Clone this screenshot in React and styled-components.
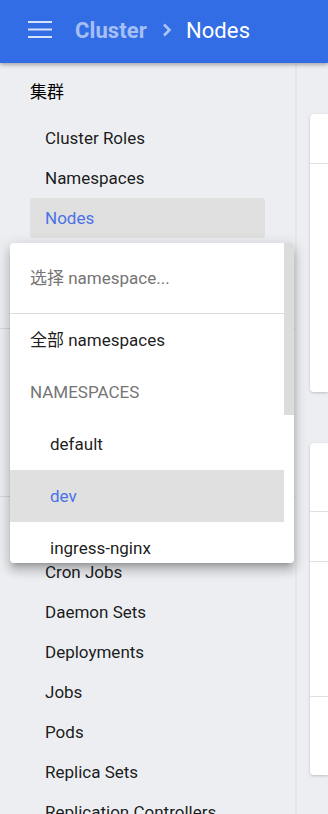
import React from 'react';
import styled, { createGlobalStyle } from 'styled-components';

const GlobalStyle = createGlobalStyle`
  html, body {
    margin: 0;
    padding: 0;
    background: #eceef1;
    font-family: Roboto, "Noto Sans CJK SC", sans-serif;
    overflow: hidden;
  }
`

const Page = styled.div`
  position: relative;
  height: 814px;
  display: flex;
  flex-direction: column;
  overflow: hidden;
`

const Toolbar = styled.header`
  height: 63px;
  flex-shrink: 0;
  background: #326de6;
  display: flex;
  align-items: center;
  padding-left: 28px;
  box-shadow: 0 2px 4px rgba(0, 0, 0, 0.3);
  position: relative;
  z-index: 2;
`

const MenuButton = styled.div`
  width: 24px;
  height: 18px;
  margin-right: 23px;
  display: flex;
  margin-top: -3px;
`

const Crumb = styled.span`
  font-size: 22px;
  font-weight: ${p => (p.$current ? 400 : 700)};
  color: ${p => (p.$current ? '#ffffff' : 'rgba(255, 255, 255, 0.58)')};
  letter-spacing: 0.1px;
  margin-top: -3px;
`

const Chevron = styled.span`
  display: flex;
  margin: -3px 14px 0 15px;
`

const Body = styled.div`
  flex: 1;
  display: flex;
  min-height: 0;
`

const Sidebar = styled.nav`
  width: 295px;
  flex-shrink: 0;
  border-right: 2px solid #e6e7ea;
  background: #eceef1;
`

const Section = styled.section`
  padding: 16px 0 10px;
  border-bottom: ${p => (p.$divided ? '1px solid #d4d5d8' : 'none')};
`

const SectionTitle = styled.div`
  height: 26px;
  line-height: 26px;
  padding-left: 30px;
  margin-bottom: 13px;
  font-size: 17px;
  color: #000;
`

const NavItem = styled.div`
  margin-left: 30px;
  width: 235px;
  height: 40px;
  line-height: 40px;
  padding-left: 15px;
  box-sizing: border-box;
  font-size: 17px;
  border-radius: 3px;
  white-space: nowrap;
  color: ${p => (p.$active ? '#4a72e6' : 'rgba(0, 0, 0, 0.9)')};
  background: ${p => (p.$active ? '#e0e0e0' : 'transparent')};
`

const SelectField = styled.div`
  margin: 0 30px 46px;
  height: 56px;
  box-sizing: border-box;
  border-bottom: 1px solid #9e9e9e;
`

const Main = styled.main`
  flex: 1;
  padding: 51px 0 0 13px;
  display: flex;
  flex-direction: column;
  gap: 51px;
`

const Card = styled.div`
  background: #fff;
  border-radius: 4px 0 0 4px;
  box-shadow: 0 1px 3px rgba(0, 0, 0, 0.2);
  display: flex;
  flex-direction: column;
`

const CardRow = styled.div`
  height: ${p => p.$h}px;
  border-bottom: ${p => (p.$last ? 'none' : '1px solid #e0e0e0')};
  box-sizing: border-box;
`

const Dropdown = styled.div`
  position: absolute;
  left: 10px;
  top: 243px;
  width: 284px;
  height: 320px;
  background: #fff;
  border-radius: 4px;
  overflow: hidden;
  display: flex;
  z-index: 5;
  box-shadow: 0 5px 5px -3px rgba(0, 0, 0, 0.2), 0 8px 10px 1px rgba(0, 0, 0, 0.14),
    0 3px 14px 2px rgba(0, 0, 0, 0.12);
`

const OptionList = styled.div`
  flex: 1;
  display: flex;
  flex-direction: column;
`

const SearchBox = styled.div`
  height: 70px;
  flex-shrink: 0;
  line-height: 70px;
  padding-left: 20px;
  font-size: 17px;
  color: #757575;
  border-bottom: 1px solid #dcdcdc;
`

const Option = styled.div`
  height: 52px;
  flex-shrink: 0;
  line-height: 52px;
  padding-left: ${p => (p.$nested ? 40 : 20)}px;
  font-size: 17px;
  color: ${p => (p.$group ? '#757575' : p.$selected ? '#4a72e6' : 'rgba(0, 0, 0, 0.9)')};
  background: ${p => (p.$selected ? '#e0e0e0' : 'transparent')};
`

const ScrollTrack = styled.div`
  width: 10px;
  flex-shrink: 0;
`

const ScrollThumb = styled.div`
  height: 172px;
  background: #dcdcdc;
`

const clusterItems = ['Cluster Roles', 'Namespaces', 'Nodes', 'Persistent Volumes', 'Storage Classes']
const workloadItems = [
  'Cron Jobs',
  'Daemon Sets',
  'Deployments',
  'Jobs',
  'Pods',
  'Replica Sets',
  'Replication Controllers',
  'Stateful Sets',
]
const namespaces = ['default', 'dev', 'ingress-nginx', 'kube-public', 'kube-system']

const App = () => {
  return (
    <Page>
      <GlobalStyle />
      <Toolbar>
        <MenuButton>
          <svg width="24" height="18" viewBox="0 0 24 18">
            <g stroke="#d6e4fb" strokeWidth="2">
              <line x1="0" y1="1" x2="24" y2="1" />
              <line x1="0" y1="8.5" x2="24" y2="8.5" />
              <line x1="0" y1="16" x2="24" y2="16" />
            </g>
          </svg>
        </MenuButton>
        <Crumb>Cluster</Crumb>
        <Chevron>
          <svg width="10" height="14" viewBox="0 0 10 14">
            <path d="M2 1.5 L7.5 7 L2 12.5" fill="none" stroke="rgba(255,255,255,0.6)" strokeWidth="2.6" />
          </svg>
        </Chevron>
        <Crumb $current>Nodes</Crumb>
      </Toolbar>

      <Body>
        <Sidebar>
          <Section $divided>
            <SectionTitle>集群</SectionTitle>
            {clusterItems.map(item => (
              <NavItem key={item} $active={item === 'Nodes'}>{item}</NavItem>
            ))}
          </Section>
          <Section $divided>
            <SectionTitle>命名空间</SectionTitle>
            <SelectField />
          </Section>
          <Section>
            <SectionTitle>工作负载</SectionTitle>
            {workloadItems.map(item => (
              <NavItem key={item}>{item}</NavItem>
            ))}
          </Section>
        </Sidebar>

        <Main>
          <Card>
            <CardRow $h={50} />
            <CardRow $h={228} $last />
          </Card>
          <Card>
            <CardRow $h={69} />
            <CardRow $h={50} />
            <CardRow $h={135} />
            <CardRow $h={78} $last />
          </Card>
        </Main>
      </Body>

      <Dropdown>
        <OptionList>
          <SearchBox>选择 namespace...</SearchBox>
          <Option>全部 namespaces</Option>
          <Option $group>NAMESPACES</Option>
          {namespaces.map(ns => (
            <Option key={ns} $nested $selected={ns === 'dev'}>{ns}</Option>
          ))}
        </OptionList>
        <ScrollTrack>
          <ScrollThumb />
        </ScrollTrack>
      </Dropdown>
    </Page>
  );
}

export default App
